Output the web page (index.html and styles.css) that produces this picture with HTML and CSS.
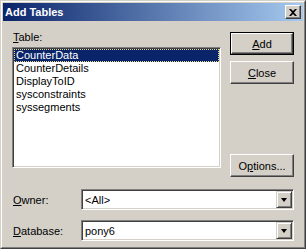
FILE: index.html
```html
<!DOCTYPE html>
<html>
<head>
    <link rel="stylesheet" href="styles.css">
    <title>Add Tables</title>
</head>
<body>
    <div class="window">
        <div class="frame">
            <div class="titlebar">
                <span class="title">Add Tables</span>
                <button type="button" class="title-close">
                    <svg width="8" height="7" viewBox="0 0 8 7">
                        <path d="M0 0h2l2 2 2-2h2L5 3.5 8 7H6L4 5 2 7H0l3-3.5z" fill="#000"/>
                    </svg>
                </button>
            </div>

            <div class="content">
                <div class="main">
                    <div class="left-col">
                        <label class="field-label"><u>T</u>able:</label>
                        <ul class="listbox">
                            <li class="selected">CounterData</li>
                            <li>CounterDetails</li>
                            <li>DisplayToID</li>
                            <li>sysconstraints</li>
                            <li>syssegments</li>
                        </ul>
                    </div>
                    <div class="right-col">
                        <button type="button" class="btn btn-default"><span><u>A</u>dd</span></button>
                        <button type="button" class="btn btn-close"><span><u>C</u>lose</span></button>
                        <button type="button" class="btn btn-options"><span>O<u>p</u>tions...</span></button>
                    </div>
                </div>

                <div class="combo-row combo-owner">
                    <label class="combo-label"><u>O</u>wner:</label>
                    <div class="combo">
                        <span class="combo-value">&lt;All&gt;</span>
                        <span class="combo-arrow"><span class="triangle"></span></span>
                    </div>
                </div>

                <div class="combo-row combo-database">
                    <label class="combo-label"><u>D</u>atabase:</label>
                    <div class="combo">
                        <span class="combo-value">pony6</span>
                        <span class="combo-arrow"><span class="triangle"></span></span>
                    </div>
                </div>
            </div>
        </div>
    </div>
</body>
</html>
```

FILE: styles.css
```css
* {
    margin: 0;
    padding: 0;
    box-sizing: border-box;
}

body {
    font-family: "Liberation Sans", Arial, sans-serif;
    font-size: 11px;
    color: #000;
    background-color: #d4d0c8;
}

/* Window frame */
.window {
    width: 306px;
    height: 249px;
    border: 1px solid;
    border-color: #d4d0c8 #404040 #404040 #d4d0c8;
    background-color: #d4d0c8;
}

.frame {
    height: 100%;
    border: 1px solid;
    border-color: #fff #808080 #808080 #fff;
    padding: 1px;
}

/* Title bar */
.titlebar {
    height: 18px;
    display: flex;
    align-items: center;
    justify-content: space-between;
    background: linear-gradient(to right, #0a246a, #a6caf0);
    padding: 0 2px 0 2px;
}

.title {
    color: #fff;
    font-weight: bold;
    font-size: 11px;
    line-height: 13px;
}

.title-close {
    width: 16px;
    height: 14px;
    display: flex;
    align-items: center;
    justify-content: center;
    background-color: #d4d0c8;
    border: 1px solid;
    border-color: #fff #404040 #404040 #fff;
    box-shadow: inset -1px -1px 0 #808080;
}

/* Dialog content */
.content {
    padding: 0 9px;
}

.main {
    display: flex;
    gap: 9px;
}

.left-col {
    width: 209px;
    display: flex;
    flex-direction: column;
}

.field-label {
    margin-top: 10px;
    padding-left: 1px;
    line-height: 13px;
}

.listbox {
    list-style: none;
    margin-top: 3px;
    height: 121px;
    background-color: #fff;
    border: 1px solid;
    border-color: #808080 #fff #fff #808080;
    box-shadow: inset 1px 1px 0 #404040, inset -1px -1px 0 #d4d0c8;
    padding: 1px;
}

.listbox li {
    height: 13px;
    line-height: 13px;
    padding-left: 2px;
    white-space: nowrap;
}

.listbox li.selected {
    background-color: #0a246a;
    color: #fff;
    outline: 1px dotted #e8d890;
    outline-offset: -1px;
}

.right-col {
    width: 64px;
    display: flex;
    flex-direction: column;
}

/* Buttons */
.btn {
    height: 23px;
    font-family: "Liberation Sans", Arial, sans-serif;
    font-size: 11px;
    color: #000;
    background-color: #d4d0c8;
    border: 1px solid;
    border-color: #fff #404040 #404040 #fff;
    box-shadow: inset -1px -1px 0 #808080;
}

.btn-default {
    margin-top: 11px;
    border: 1px solid #000;
    box-shadow: none;
}

.btn-default span {
    display: flex;
    align-items: center;
    justify-content: center;
    height: 100%;
    border: 1px solid;
    border-color: #fff #404040 #404040 #fff;
    box-shadow: inset -1px -1px 0 #808080;
}

.btn-close {
    margin-top: 6px;
}

.btn-options {
    margin-top: 70px;
}

/* Combo rows */
.combo-row {
    display: flex;
    align-items: center;
    height: 21px;
}

.combo-owner {
    margin-top: 12px;
}

.combo-database {
    margin-top: 10px;
}

.combo-label {
    width: 69px;
    padding-left: 1px;
}

.combo {
    flex: 1;
    height: 21px;
    display: flex;
    align-items: center;
    background-color: #fff;
    border: 1px solid;
    border-color: #808080 #fff #fff #808080;
    box-shadow: inset 1px 1px 0 #404040, inset -1px -1px 0 #d4d0c8;
    padding: 1px 1px 1px 2px;
}

.combo-value {
    flex: 1;
    padding-left: 1px;
}

.combo-arrow {
    width: 16px;
    height: 17px;
    display: flex;
    align-items: center;
    justify-content: center;
    background-color: #d4d0c8;
    border: 1px solid;
    border-color: #d4d0c8 #404040 #404040 #d4d0c8;
    box-shadow: inset 1px 1px 0 #fff, inset -1px -1px 0 #808080;
}

.triangle {
    width: 0;
    height: 0;
    border-left: 3.5px solid transparent;
    border-right: 3.5px solid transparent;
    border-top: 4px solid #000;
}
```
